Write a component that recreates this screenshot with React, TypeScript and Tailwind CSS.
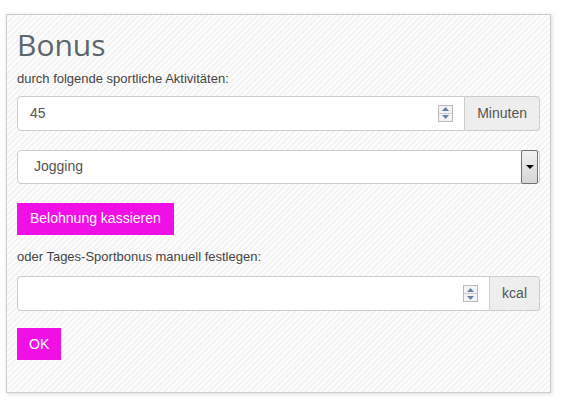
import React from 'react';

const Spinner = () => (
    <div className="flex flex-col w-[15px] h-[17px] border border-[#bbb] bg-[#f3f3f3]">
        <div className="flex-1 flex items-center justify-center border-b border-[#ccc]">
            <svg width="7" height="4" viewBox="0 0 7 4"><path d="M0 4 L3.5 0 L7 4 Z" fill="#6a7fa8" /></svg>
        </div>
        <div className="flex-1 flex items-center justify-center">
            <svg width="7" height="4" viewBox="0 0 7 4"><path d="M0 0 L3.5 4 L7 0 Z" fill="#6a7fa8" /></svg>
        </div>
    </div>
);

const NumberGroup: React.FC<{ value: string; unit: string }> = ({ value, unit }) => (
    <div className="flex h-[35px]">
        <div className="flex-1 flex items-center bg-white border border-[#ccc] rounded-l-[4px] pl-[12px] pr-[11px]">
            <span className="flex-1 text-[14px] text-[#555]">{value}</span>
            <Spinner />
        </div>
        <div className="flex items-center px-[12px] bg-[#eee] border border-l-0 border-[#ccc] rounded-r-[4px] text-[14px] text-[#555]">{unit}</div>
    </div>
);

export default function App() {
    return (
        <div className="w-[562px] h-[404px] bg-white pt-[14px] pl-[6px] font-['Liberation_Sans',Arial,sans-serif]">
            <div className="w-[545px] h-[379px] border border-[#ccc] shadow-[1px_1px_4px_rgba(0,0,0,0.15)] bg-[repeating-linear-gradient(-45deg,#f4f4f4_0px,#f4f4f4_2px,#fdfdfd_2px,#fdfdfd_4px)] px-[10px] pt-[12px]">
                <h1 className="font-['Open_Sans',sans-serif] text-[30px] leading-[36px] text-[#5c666d]">Bonus</h1>
                <p className="mt-[6px] text-[13px] text-[#444]">durch folgende sportliche Aktivitäten:</p>
                <div className="mt-[7px]">
                    <NumberGroup value="45" unit="Minuten" />
                </div>
                <div className="mt-[19px] flex h-[34px] bg-white border border-[#ccc] rounded-[4px] items-center pl-[16px] pr-[1px]">
                    <span className="flex-1 text-[14px] text-[#555]">Jogging</span>
                    <div className="w-[17px] h-[34px] border border-[#707070] rounded-[2px] bg-gradient-to-b from-[#f2f2f2] to-[#d5d5d5] flex items-center justify-center">
                        <svg width="8" height="4" viewBox="0 0 8 4"><path d="M0 0 L8 0 L4 4 Z" fill="#000" /></svg>
                    </div>
                </div>
                <button className="mt-[19px] h-[32px] px-[13px] bg-[#f010e6] text-white text-[14px]">Belohnung kassieren</button>
                <p className="mt-[12px] text-[13px] text-[#444]">oder Tages-Sportbonus manuell festlegen:</p>
                <div className="mt-[10px]">
                    <NumberGroup value="" unit="kcal" />
                </div>
                <button className="mt-[17px] h-[32px] px-[12px] bg-[#f010e6] text-white text-[14px]">OK</button>
            </div>
        </div>
    );
}
